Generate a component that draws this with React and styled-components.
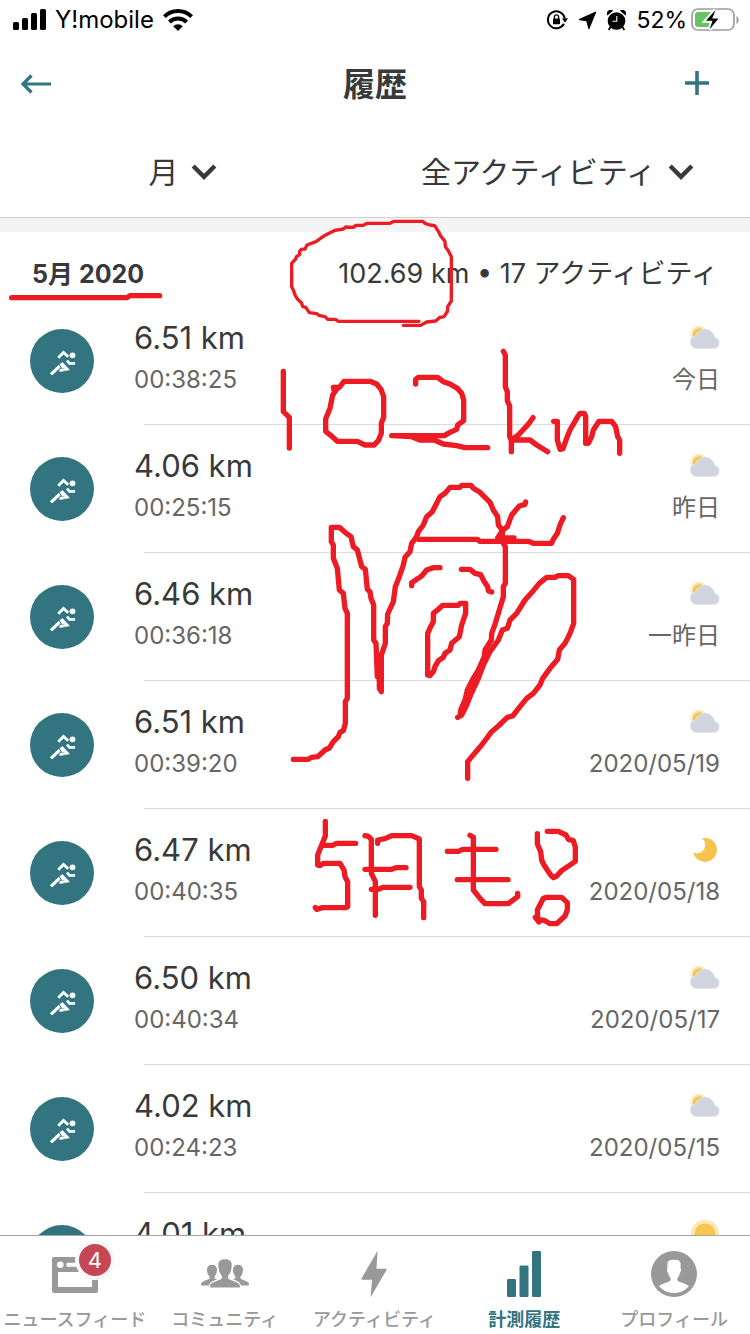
import React from 'react';
import styled, { createGlobalStyle } from 'styled-components';

const color = {
  teal: '#32747f',
  ink: '#37393a',
  muted: '#666666',
  tab: '#999999',
  line: '#dcdcdc',
  red: '#ed1c24',
};

const GlobalStyle = createGlobalStyle`
  * { box-sizing: border-box; }
  body {
    margin: 0;
    background: #ffffff;
    color: ${color.ink};
    font-family: Inter, "Noto Sans CJK JP", sans-serif;
  }
  button, select { font: inherit; color: inherit; }
`;

const Screen = styled.div`
  position: relative;
  display: flex;
  flex-direction: column;
  height: 100vh;
  overflow: hidden;
`;

const StatusBar = styled.div`
  display: flex;
  justify-content: space-between;
  align-items: center;
  height: 40px;
  padding: 0 11px 0 13px;
  color: #000000;
  font-size: 24px;
  line-height: 40px;
`;

const StatusGroup = styled.div`
  display: flex;
  align-items: center;
  gap: ${(p) => p.$gap}px;
`;

const Percent = styled.span`
  font-size: 23px;
`;

const Header = styled.header`
  display: grid;
  grid-template-columns: 106px 1fr 106px;
  align-items: center;
  height: 88px;
`;

const IconButton = styled.button`
  display: flex;
  justify-content: ${(p) => (p.$start ? 'flex-start' : 'center')};
  align-items: center;
  height: 64px;
  padding: ${(p) => (p.$start ? '0 0 0 20px' : '0')};
  border: 0;
  background: none;
`;

const Title = styled.h1`
  margin: 0;
  padding-top: 2px;
  text-align: center;
  font-size: 32px;
  line-height: 40px;
  font-weight: 700;
`;

const Filters = styled.div`
  display: grid;
  grid-template-columns: 1fr 1fr;
  height: 90px;
  padding-bottom: 2px;
  border-bottom: 1px solid #cfcfcf;
`;

const Filter = styled.label`
  display: flex;
  justify-content: center;
  align-items: center;
  gap: 12px;
  padding-right: 10px;
`;

const FilterSelect = styled.select`
  appearance: none;
  field-sizing: content;
  height: 48px;
  padding: 0;
  border: 0;
  background: none;
  font-size: 30px;
`;

const Main = styled.main`
  flex: 1;
  min-height: 0;
  overflow: hidden;
  border-top: 14px solid #f4f4f4;
`;

const MonthHeader = styled.div`
  display: flex;
  justify-content: space-between;
  align-items: center;
  height: 65px;
  padding: 18px 32px 0;
`;

const MonthTitle = styled.h2`
  margin: 0;
  font-size: 25px;
  line-height: 40px;
  font-weight: 700;
`;

const MonthTotal = styled.div`
  font-size: 27px;
  line-height: 40px;
`;

const List = styled.ul`
  margin: 0;
  padding: 0;
  list-style: none;
`;

const Row = styled.li`
  &::after {
    content: '';
    display: block;
    height: 1px;
    margin-left: 144px;
    background: ${color.line};
  }
`;

const RowBody = styled.div`
  display: flex;
  align-items: center;
  height: 127px;
  padding: 0 30px;
`;

const RunBadge = styled.span`
  display: flex;
  width: 64px;
  height: 64px;
  margin-right: 40px;
  border-radius: 50%;
  background: ${color.teal};
`;

const Column = styled.div`
  display: flex;
  flex-direction: column;
  align-items: ${(p) => (p.$end ? 'flex-end' : 'flex-start')};
  gap: 6px;
  height: 86px;
  margin-left: ${(p) => (p.$end ? 'auto' : '0')};
`;

const Distance = styled.div`
  font-size: 31px;
  line-height: 40px;
`;

const Weather = styled.div`
  display: flex;
  align-items: center;
  height: 40px;
`;

const Small = styled.div`
  color: ${color.muted};
  font-size: 24px;
  line-height: 32px;
`;

const TabBar = styled.nav`
  display: grid;
  grid-template-columns: repeat(5, 1fr);
  height: 99px;
  padding-right: 1px;
  border-top: 1px solid #a5a5a5;
  background: #ffffff;
`;

const Tab = styled.a`
  display: flex;
  flex-direction: column;
  align-items: center;
  gap: 10px;
  padding-top: 14px;
  color: ${(p) => (p.$active ? color.teal : color.tab)};
  font-size: 18px;
  line-height: 24px;
  font-weight: ${(p) => (p.$active ? 700 : 500)};
  text-decoration: none;
  white-space: nowrap;
`;

const TabIcon = styled.span`
  position: relative;
  display: flex;
  width: 48px;
  height: 48px;
`;

const Count = styled.span`
  position: absolute;
  top: -10px;
  left: 24px;
  width: 40px;
  height: 40px;
  border: 4px solid #f9f9f9;
  border-radius: 50%;
  background: #c74656;
  color: #ffffff;
  font-size: 22px;
  font-weight: 400;
  line-height: 32px;
  text-align: center;
`;

const Scribble = styled.svg`
  position: absolute;
  top: 0;
  left: 0;
  pointer-events: none;
`;

const SignalIcon = () => (
  <svg width="33" height="22" viewBox="0 0 33 22" aria-hidden="true">
    <rect x="0" y="13" width="6" height="8" rx="1.6" />
    <rect x="9" y="9" width="6" height="12" rx="1.6" />
    <rect x="18" y="4" width="6" height="17" rx="1.6" />
    <rect x="27" y="0" width="6" height="21" rx="1.6" />
  </svg>
);

const WifiIcon = () => (
  <svg width="30" height="22" viewBox="0 0 30 22" aria-hidden="true">
    <g fill="none" stroke="#000" strokeWidth="4">
      <path d="M1.4 7.6a19.5 19.5 0 0 1 27.2 0" />
      <path d="M6.4 13a12.3 12.3 0 0 1 17.2 0" />
    </g>
    <path d="M10.2 17.2a6.8 6.8 0 0 1 9.6 0L15 22z" />
  </svg>
);

const LockIcon = () => (
  <svg width="21" height="20" viewBox="0 0 21 20" aria-hidden="true">
    <path d="M16.9 13.8A8.5 8.5 0 1 1 17.7 8" fill="none" stroke="#000" strokeWidth="2" />
    <path d="M15 8.2h6l-3 4.6z" />
    <rect x="6" y="8.6" width="7" height="5.6" rx=".8" />
    <path d="M7.4 9V7a2.1 2.1 0 0 1 4.2 0v2" fill="none" stroke="#000" strokeWidth="1.3" />
  </svg>
);

const LocationIcon = () => (
  <svg width="19" height="19" viewBox="0 0 19 19" stroke="#000" strokeLinejoin="round" aria-hidden="true">
    <path d="M17.800 1 1 8.600l7.700 1.200 2.200 8z" />
  </svg>
);

const AlarmIcon = () => (
  <svg width="19" height="21" viewBox="0 0 19 21" aria-hidden="true">
    <circle cx="9.5" cy="11" r="8.8" />
    <path d="M.3 5A3.600 3.600 0 0 1 5.600.7zM18.700 5A3.600 3.600 0 0 0 13.400.7z" stroke="#000" />
    <path d="m3.500 17-1.800 3M15.500 17l1.800 3" stroke="#000" strokeWidth="1.800" />
    <path d="M9.800 6v5.300H5.500" fill="none" stroke="#fff" strokeWidth="1.100" />
  </svg>
);

const BatteryIcon = () => (
  <svg width="48" height="24" viewBox="0 0 48 24" aria-hidden="true">
    <rect x="1" y="1" width="42" height="21" rx="6" fill="none" stroke="#9d9d9d" strokeWidth="1.700" />
    <path d="M45.500 8v8c3-1.500 3-6.500 0-8z" fill="#9d9d9d" />
    <path d="M7 4h14v15H7a3 3 0 0 1-3-3V7a3 3 0 0 1 3-3z" fill="#64c466" />
    <path d="M24.500 2 15 12.700h6.500l-3 8.800 9-11h-6.300z" stroke="#fff" strokeWidth="4" paintOrder="stroke" />
  </svg>
);

const BackIcon = () => (
  <svg width="32" height="20" viewBox="0 0 32 20" fill="none" stroke={color.teal} strokeWidth="3.200" aria-hidden="true">
    <path d="M31 10H3M11.500 1.500 3 10l8.500 8.500" />
  </svg>
);

const PlusIcon = () => (
  <svg width="26" height="28" viewBox="0 0 26 28" stroke={color.teal} strokeWidth="3.600" aria-hidden="true">
    <path d="M13 1v24M1 13h24" />
  </svg>
);

const Chevron = () => (
  <svg width="26" height="18" viewBox="0 0 26 18" fill="none" stroke={color.ink} strokeWidth="4.400" aria-hidden="true">
    <path d="m2.200 3 10.800 10.800L23.800 3" />
  </svg>
);

const Runner = () => (
  <svg width="64" height="64" viewBox="0 0 64 64" fill="none" stroke="#fff" strokeWidth="2.800" aria-hidden="true">
    <circle cx="42.500" cy="26.300" r="2.900" fill="#fff" stroke="none" />
    <path d="m28.300 28.800 5.200-5.300 4.700 4.300M37 31.600l2.400 2.800h5.700" />
    <path d="m21 45.300 8.600-8.100" strokeWidth="3.200" />
    <path d="m31.600 34.200 5.600 5.900-7.700 1.500" />
    <path d="m31 34.300 3 4.500" strokeWidth="3.600" />
  </svg>
);

const CloudIcon = () => (
  <svg width="30" height="26" viewBox="0 0 30 26" role="img" aria-label="cloudy">
    <circle cx="9" cy="9.500" r="8.500" fill="#fbe8b2" />
    <circle cx="9" cy="9.500" r="6.300" fill="#f7c64f" />
    <path
      d="M6.500 23.400a6.200 6.200 0 0 1-1-12.300 10 10 0 0 1 19.300 1.300 5.600 5.600 0 0 1-.6 11z"
      fill="#ced5de"
      stroke="#dfe4ea"
      strokeWidth="1"
    />
  </svg>
);

const MoonIcon = () => (
  <svg width="30" height="26" viewBox="0 0 30 26" role="img" aria-label="clear night">
    <path d="M12 1.200A12 12 0 1 1 3.200 15.600 8.500 8.500 0 0 0 12 1.200z" fill="#f6c34c" />
  </svg>
);

const SunIcon = () => (
  <svg width="30" height="30" viewBox="0 0 30 30" role="img" aria-label="sunny">
    <circle cx="15" cy="15" r="14.200" fill="#fbe8b2" />
    <circle cx="15" cy="15" r="10.500" fill="#f7c64f" />
  </svg>
);

const FeedIcon = () => (
  <svg width="48" height="48" viewBox="0 0 48 48" fill="currentColor" aria-hidden="true">
    <path
      fillRule="evenodd"
      d="M3 7h42a2 2 0 0 1 2 2v32a2 2 0 0 1-2 2H3a2 2 0 0 1-2-2V9a2 2 0 0 1 2-2zm4 15v15h34V22zm2.300-10.600a3.300 3.300 0 1 0 0 6.600 3.300 3.300 0 0 0 0-6.600zm7.200 1.300a1 1 0 0 0-1 1v2a1 1 0 0 0 1 1H40v-4z"
    />
  </svg>
);

const PeopleIcon = () => (
  <svg width="48" height="48" viewBox="0 0 48 48" fill="currentColor" aria-hidden="true">
    <path d="M11 14.800c3 0 5 1.700 5 4.700 0 2.800-.9 5.500-2.300 6.700v2.300l3.600 1.500c-2 .9-2.300 2-2.600 5.500H0c0-2.600.5-3.400 2.800-4.200l5.100-2.200c.9-.5.900-2.300.3-2.900C6.800 25 6 22.300 6 19.500c0-3 2-4.700 5-4.700z" />
    <path d="M37 14.800c-3 0-5 1.700-5 4.700 0 2.800.9 5.500 2.300 6.700v2.300l-3.600 1.500c2 .9 2.300 2 2.600 5.500H48c0-2.600-.5-3.400-2.800-4.200l-5.100-2.200c-.9-.5-.9-2.300-.3-2.900 1.400-1.200 2.200-3.900 2.200-6.700 0-3-2-4.700-5-4.700z" />
    <path
      d="M24 9.300c4.600 0 7 2.200 6.700 6.200-.2 4.500-1.400 7.900-3.200 9.800-.8 1-.7 3.200.6 3.900l7.400 3c3 1.200 3.500 2.300 3.500 5.300H9c0-3 .5-4.100 3.500-5.300l7.400-3c1.300-.7 1.400-2.900.6-3.900-1.800-1.900-3-5.300-3.200-9.800-.3-4 2.100-6.200 6.700-6.200z"
      stroke="#fff"
      strokeWidth="2.400"
      paintOrder="stroke"
    />
  </svg>
);

const BoltIcon = () => (
  <svg width="48" height="48" viewBox="0 0 48 48" fill="currentColor" aria-hidden="true">
    <path d="M27.600.7 11.500 28.500c-.3.700 0 1.200.8 1.200H22l-1.400 17.600L36.500 20c.4-.800.100-1.300-.700-1.300h-9.300z" />
  </svg>
);

const BarsIcon = () => (
  <svg width="48" height="48" viewBox="0 0 48 48" fill="currentColor" aria-hidden="true">
    <rect x="7" y="29" width="9" height="18" rx="1.200" />
    <rect x="19.500" y="15.500" width="9" height="31.500" rx="1.200" />
    <rect x="32" y="1" width="9" height="46" rx="1.200" />
  </svg>
);

const ProfileIcon = () => (
  <svg width="48" height="48" viewBox="0 0 48 48" aria-hidden="true">
    <circle cx="24" cy="24" r="23" fill="currentColor" />
    <path
      d="M24 9.800c5 0 7 1.500 6.600 5.400v3.300c.8.700.5 3.300-.7 4.300-.3 2-1 3.700-2.400 5-.6 2.200.4 3.500 2.600 4.300 4 1.400 6.900 2.400 8.900 4-3.600 4.500-9 7-15 7s-11.400-2.500-15-7c2-1.600 4.900-2.600 8.900-4 2.200-.8 3.200-2.100 2.600-4.300-1.400-1.300-2.100-3-2.400-5-1.200-1-1.500-3.600-.7-4.300v-3.300C17 11.300 19 9.800 24 9.800z"
      fill="#fff"
    />
  </svg>
);

const weatherIcons = { cloud: CloudIcon, moon: MoonIcon, sun: SunIcon };

const activities = [
  { km: '6.51 km', time: '00:38:25', weather: 'cloud', date: '今日' },
  { km: '4.06 km', time: '00:25:15', weather: 'cloud', date: '昨日' },
  { km: '6.46 km', time: '00:36:18', weather: 'cloud', date: '一昨日' },
  { km: '6.51 km', time: '00:39:20', weather: 'cloud', date: '2020/05/19' },
  { km: '6.47 km', time: '00:40:35', weather: 'moon', date: '2020/05/18' },
  { km: '6.50 km', time: '00:40:34', weather: 'cloud', date: '2020/05/17' },
  { km: '4.02 km', time: '00:24:23', weather: 'cloud', date: '2020/05/15' },
  { km: '4.01 km', time: '', weather: 'sun', date: '' },
];

const tabs = [
  { label: 'ニュースフィード', Icon: FeedIcon, count: 4 },
  { label: 'コミュニティ', Icon: PeopleIcon },
  { label: 'アクティビティ', Icon: BoltIcon },
  { label: '計測履歴', Icon: BarsIcon, active: true },
  { label: 'プロフィール', Icon: ProfileIcon },
];

/* Pen strokes, in groups: each has an origin on the page and points in thirds of a pixel. */
const penGroups = [
  {
    x: 0, y: 210, width: 16,
    strokes: ['35,263 380,263 390,257 479,257'],
  },
  {
    x: 0, y: 210, width: 10,
    strokes: [
      '1257,334 1015,334 1006,328 983,328 975,320 957,316 950,311 928,308 918,293 908,289 904,278 893,268 886,257 880,240 875,230 875,160 887,147 890,139 899,134 899,124 904,118 915,117 921,105 948,95 970,79 1005,61 1030,57 1037,51 1060,52 1068,46 1090,46 1102,40 1170,40 1182,34 1268,34 1275,40 1290,45 1304,47 1315,64 1322,78 1335,94 1336,110 1345,122 1354,140 1354,273 1343,290 1343,303 1332,320 1318,323 1307,333 1280,336 1262,346 1210,346',
    ],
  },
  {
    x: 270, y: 360, width: 16,
    strokes: [
      '40,34 40,155 58,172 58,264',
      '192,90 190,82 208,82 222,64 300,64 320,72 333,88 341,110 341,172 334,190 334,220 325,242 312,255 285,255 262,244 202,244 182,226 167,214 167,176 180,145 188,105 200,88',
    ],
  },
  {
    x: 375, y: 210, width: 16,
    strokes: [
      '122,522 122,508 130,502 188,502 205,515 225,522 247,535 260,550 266,570 266,632 248,645 245,658 225,667 208,677 50,677 110,680 135,690 178,690 205,702 245,707 270,713 338,713',
      '385,424 391,435 391,530 397,545 397,572 404,588 404,680 409,690 409,725',
      '474,623 462,640 430,675 409,690 465,690 485,705 518,725',
      '536,634 547,634 547,690 555,718 564,716 575,685 585,660 608,620 615,610 628,610 632,620 632,700 640,700 650,680 655,660 672,634 710,634 722,650 728,680 734,690 734,730',
    ],
  },
  {
    x: 270, y: 470, width: 16,
    strokes: [
      '70,868 115,868 125,862 143,860 165,840 178,834 190,815 205,800 210,787 220,782 226,760 226,695 232,685 232,430 225,415 220,370 208,360 202,295 190,265 190,225 184,215 184,172 208,172 225,187 243,200 250,230 262,240 275,290 286,298 292,358 300,365 303,385 311,405 311,510 318,520 322,620 328,625 328,655 334,665 334,555 346,520 346,470 352,460 353,432 370,395 376,350 388,320 400,285 405,262 420,245 425,220 440,200 445,185 460,165 470,140 487,125 500,100 510,80 525,70 540,52 570,52 575,46 603,46 610,55 630,67 660,97 670,120 683,140 685,165 697,180 697,215 706,230 706,340 700,350 700,380 685,430 676,460 665,490 664,510 645,540 643,560 625,600 610,625 592,660 585,690 572,720 570,738 563,742',
      '575,735 590,705 604,670 625,625 640,585 660,545 685,510 697,480 712,475 720,450 740,430 765,390 790,362 808,340 830,322 855,322 865,317 895,317 911,328 911,460 900,490 885,520 868,540 863,568 840,595 818,625 810,645 790,670 770,685 750,710 728,738 712,742 685,768 665,785 635,825 605,860 593,875 593,925',
      '445,208 622,208 630,214 775,214 790,220 845,220 850,208 862,190 870,165 880,143',
      '732,204 683,204 697,182 712,170 725,135 748,108 765,103 767,96',
      '425,347 425,338 445,325 455,318 470,300 490,293 510,293',
      '574,298 600,298 615,310 632,314 643,335 653,350 655,362 665,366',
      '473,615 473,490 482,470 490,455 490,430 500,422 518,406 565,406 570,400 587,400 587,430 575,465 568,500 545,520 540,540 525,550 520,562 505,572 495,590 490,605 480,617 473,615',
    ],
  },
  {
    x: 290, y: 810, width: 16,
    strokes: [
      '106,34 106,78 95,105 83,135 83,165 90,167 100,160 150,160 162,180 165,200 173,215 173,290 168,293 97,293 80,298 76,293',
      '100,106 128,106 140,100 197,100',
      '225,77 235,79 244,88 244,190 256,215 256,316',
      '263,100 263,90 285,86 305,77 365,77 388,87 388,230 394,240 394,265 401,275 401,323',
      '225,178 305,178 318,173 348,173',
      '244,238 265,238 280,232 360,232',
      '540,76 550,82 550,240 570,265 585,281 655,281 683,260 683,250',
      '472,124 505,124 518,118 618,118',
      '502,209 654,209',
      '742,71 742,102 752,125 755,150 762,165 782,195 790,203 800,198 815,182 856,154 856,112 850,92 835,88 828,75 805,64 772,64',
      '736,322 747,336 743,326 742,300 760,265 770,262 815,262 832,278 832,300 825,318 800,341 780,341 765,332 745,328',
    ],
  },
];

const PenDrawing = () => (
  <Scribble width="750" height="960" viewBox="0 0 750 960" role="img" aria-label="102km 5月も!">
    {penGroups.map((group, i) => (
      <g
        key={i}
        transform={`translate(${group.x} ${group.y}) scale(${1 / 3})`}
        fill="none"
        stroke={color.red}
        strokeWidth={group.width}
        strokeLinecap="round"
        strokeLinejoin="round"
      >
        {group.strokes.map((points) => (
          <polyline key={points} points={points} />
        ))}
      </g>
    ))}
  </Scribble>
);

const Activity = ({ km, time, weather, date }) => {
  const WeatherIcon = weatherIcons[weather];
  return (
    <Row>
      <RowBody>
        <RunBadge><Runner /></RunBadge>
        <Column>
          <Distance>{km}</Distance>
          <Small>{time}</Small>
        </Column>
        <Column $end>
          <Weather><WeatherIcon /></Weather>
          <Small>{date}</Small>
        </Column>
      </RowBody>
    </Row>
  );
};

export default function App() {
  return (
    <>
      <GlobalStyle />
      <Screen lang="ja">
        <StatusBar>
          <StatusGroup $gap={9}>
            <SignalIcon />
            <span>Y!mobile</span>
            <WifiIcon />
          </StatusGroup>
          <StatusGroup $gap={10}>
            <LockIcon />
            <LocationIcon />
            <AlarmIcon />
            <StatusGroup $gap={4}>
              <Percent>52%</Percent>
              <BatteryIcon />
            </StatusGroup>
          </StatusGroup>
        </StatusBar>
        <Header>
          <IconButton type="button" aria-label="戻る" $start><BackIcon /></IconButton>
          <Title>履歴</Title>
          <IconButton type="button" aria-label="追加"><PlusIcon /></IconButton>
        </Header>
        <Filters>
          <Filter>
            <FilterSelect aria-label="期間"><option>月</option></FilterSelect>
            <Chevron />
          </Filter>
          <Filter>
            <FilterSelect aria-label="種類"><option>全アクティビティ</option></FilterSelect>
            <Chevron />
          </Filter>
        </Filters>
        <Main>
          <MonthHeader>
            <MonthTitle>5月 2020</MonthTitle>
            <MonthTotal>102.69 km • 17 アクティビティ</MonthTotal>
          </MonthHeader>
          <List>
            {activities.map((item, i) => <Activity key={i} {...item} />)}
          </List>
        </Main>
        <TabBar>
          {tabs.map(({ label, Icon, count, active }) => (
            <Tab key={label} href="#" $active={active}>
              <TabIcon>
                <Icon />
                {count && <Count>{count}</Count>}
              </TabIcon>
              {label}
            </Tab>
          ))}
        </TabBar>
        <PenDrawing />
      </Screen>
    </>
  );
}
